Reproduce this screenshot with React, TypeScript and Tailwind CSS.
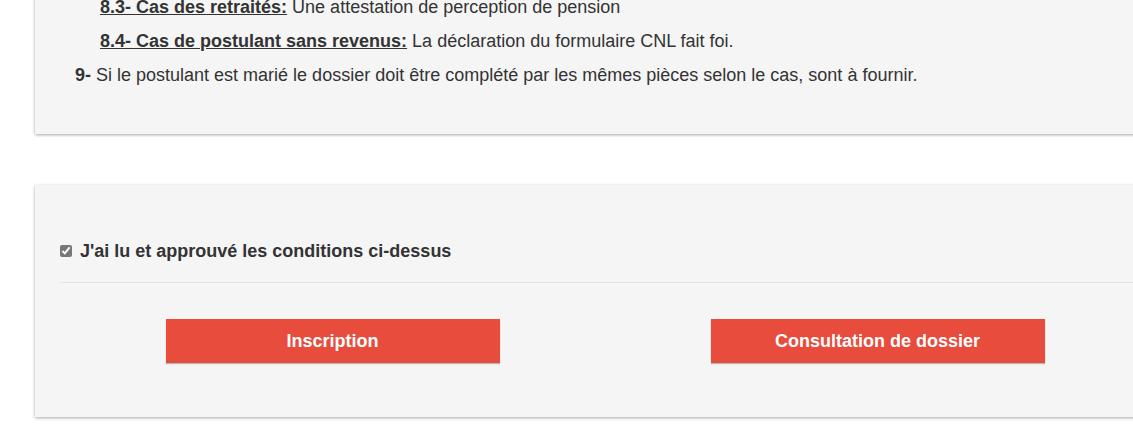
import React from "react";

const font = { fontFamily: '"Liberation Sans", Arial, sans-serif' };

export default function App() {
  return (
    <div className="w-[1133px] h-[441px] overflow-hidden bg-white text-[#333]" style={font}>
      {/* conditions list, top cut off */}
      <div className="ml-[35px] w-[1140px] -mt-[10px] bg-[#f5f5f5] shadow-[0_1px_3px_rgba(0,0,0,0.35)] pb-[42px] text-[18px]">
        <p className="pl-[65px] leading-[34px]">
          <span className="font-bold underline">8.3- Cas des retraités:</span> Une attestation de perception de pension
        </p>
        <p className="pl-[65px] leading-[34px]">
          <span className="font-bold underline">8.4- Cas de postulant sans revenus:</span> La déclaration du formulaire CNL fait foi.
        </p>
        <p className="pl-[40px] leading-[34px]">
          <span className="font-bold">9-</span> Si le postulant est marié le dossier doit être complété par les mêmes pièces selon le cas, sont à fournir.
        </p>
      </div>

      <div className="ml-[35px] mt-[51px] w-[1140px] bg-[#f5f5f5] shadow-[0_1px_3px_rgba(0,0,0,0.35)] px-[25px] pt-[54px] pb-[54px]">
        <label className="flex items-center gap-[8px] h-[24px]">
          <input type="checkbox" defaultChecked className="w-[12px] h-[12px] accent-[#777]" />
          <span className="font-bold text-[18px]">J'ai lu et approuvé les conditions ci-dessus</span>
        </label>
        <div className="mt-[19px] border-t border-[#e3e3e3]" />
        <div className="grid grid-cols-2 w-[1090px] pt-[36px]">
          <div className="flex justify-center">
            <button className="w-[334px] h-[44px] bg-[#e74c3c] text-white font-bold text-[18px] shadow-[0_1px_1px_rgba(0,0,0,0.25)]">
              Inscription
            </button>
          </div>
          <div className="flex justify-center">
            <button className="w-[334px] h-[44px] bg-[#e74c3c] text-white font-bold text-[18px] shadow-[0_1px_1px_rgba(0,0,0,0.25)]">
              Consultation de dossier
            </button>
          </div>
        </div>
      </div>
    </div>
  );
}
